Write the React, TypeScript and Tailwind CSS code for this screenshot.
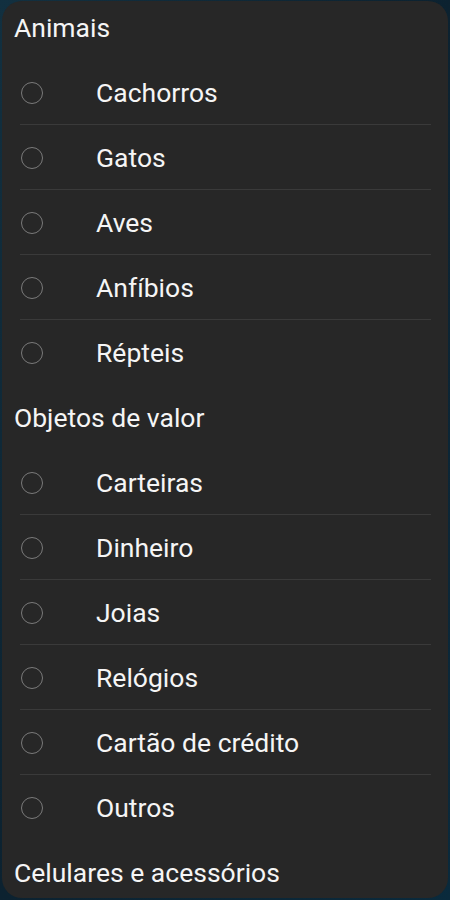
const groups = [
  {
    title: "Animais",
    items: ["Cachorros", "Gatos", "Aves", "Anfíbios", "Répteis"],
  },
  {
    title: "Objetos de valor",
    items: ["Carteiras", "Dinheiro", "Joias", "Relógios", "Cartão de crédito", "Outros"],
  },
  {
    title: "Celulares e acessórios",
    items: [],
  },
];

function Radio() {
  return <span className="block h-[22px] w-[22px] rounded-full border-[1.5px] border-[#7a7a7a]" />;
}

export default function App() {
  return (
    <div
      className="h-[900px] w-[450px] overflow-hidden bg-gradient-to-br from-[#123040] via-[#0c2230] to-[#0a2a3c] px-[2px] py-[1px]"
      style={{ fontFamily: "Roboto, 'Noto Sans', sans-serif" }}
    >
      <div className="h-[897px] overflow-hidden rounded-[20px] bg-[#272727]">
        <div className="-mt-[6px]">
          {groups.map((group) => (
            <div key={group.title}>
              <div className="flex h-[65px] items-center pl-[12px] text-[26.5px] text-[#f5f5f5]">
                {group.title}
              </div>
              {group.items.map((item, i) => (
                <div key={item} className="relative flex h-[65px] items-center">
                  <div className="flex w-[94px] pl-[19px]">
                    <Radio />
                  </div>
                  <span className="text-[26.5px] text-[#f5f5f5]">{item}</span>
                  {i < group.items.length - 1 && (
                    <div className="absolute bottom-0 left-[18px] right-[17px] h-px bg-[#3a3a3a]" />
                  )}
                </div>
              ))}
            </div>
          ))}
        </div>
      </div>
    </div>
  );
}
